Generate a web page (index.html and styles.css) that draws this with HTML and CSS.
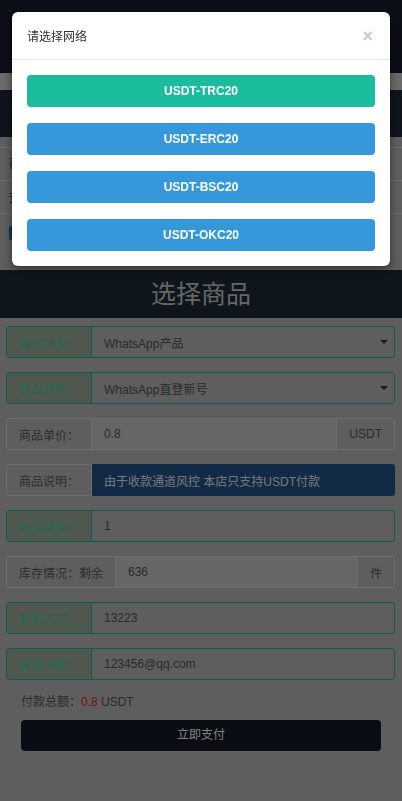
FILE: index.html
```html
<!DOCTYPE html>
<html lang="zh-CN">
<head>
<meta charset="utf-8">
<meta name="viewport" content="width=device-width, initial-scale=1">
<title>选择商品</title>
<link rel="stylesheet" href="styles.css">
</head>
<body>
<div class="page">
  <div class="topbar"></div>
  <div class="band"></div>
  <div class="subbar"></div>
  <div class="query">
    <div class="qrow">商品订单</div>
    <div class="qrow">查询方式</div>
    <div class="qactions"><span class="qbtn"></span></div>
  </div>
  <div class="hero">选择商品</div>
  <div class="form">
    <div class="row row-ok">
      <div class="label">商品分类：</div>
      <div class="field">WhatsApp产品<span class="caret"></span></div>
    </div>
    <div class="row row-ok">
      <div class="label">商品名称：</div>
      <div class="field">WhatsApp直登新号<span class="caret"></span></div>
    </div>
    <div class="row">
      <div class="label">商品单价：</div>
      <div class="field field-ro">0.8</div>
      <div class="addon">USDT</div>
    </div>
    <div class="row">
      <div class="label">商品说明：</div>
      <div class="field field-desc">由于收款通道风控 本店只支持USDT付款</div>
    </div>
    <div class="row row-ok">
      <div class="label">购买数量：</div>
      <div class="field">1</div>
    </div>
    <div class="row">
      <div class="label">库存情况：剩余</div>
      <div class="field field-ro">636</div>
      <div class="addon">件</div>
    </div>
    <div class="row row-ok">
      <div class="label">联系方式：</div>
      <div class="field">13223</div>
    </div>
    <div class="row row-ok">
      <div class="label">发送卡密：</div>
      <div class="field">123456@qq.com</div>
    </div>
    <div class="summary">
      <div class="total">付款总额：<span class="amount">0.8</span> USDT</div>
      <div class="pay">立即支付</div>
    </div>
  </div>
</div>
<div class="backdrop"></div>
<div class="modal">
  <div class="modal-header">
    <span class="modal-title">请选择网络</span>
    <span class="close">×</span>
  </div>
  <div class="modal-body">
    <div class="net net-green">USDT-TRC20</div>
    <div class="net">USDT-ERC20</div>
    <div class="net">USDT-BSC20</div>
    <div class="net">USDT-OKC20</div>
  </div>
</div>
</body>
</html>
```
FILE: styles.css
```css
* { box-sizing: border-box; }
html, body { margin: 0; padding: 0; }
body {
  font-family: "Liberation Sans", "Noto Sans CJK SC", sans-serif;
  font-size: 12px;
  color: #333;
  background: #bcbcbc;
  width: 402px;
  height: 801px;
  overflow: hidden;
}
.page { background: #bcbcbc; min-height: 801px; }
.topbar { height: 73px; background: #161c2c; }
.band { height: 17px; background: #d4d4d4; }
.subbar { height: 47px; background: #1e2838; }
.query { padding-top: 10px; background: #bcbcbc; }
.qrow {
  height: 33px;
  line-height: 33px;
  border-top: 1px solid #dcdcdc;
  padding-left: 9px;
  color: #222;
  font-size: 12px;
}
.qrow + .qrow { height: 34px; line-height: 34px; border-bottom: 1px solid #dcdcdc; }
.qactions { padding: 12px 9px 30px; }
.qbtn {
  display: block;
  width: 14px;
  height: 14px;
  background: #2a6cb0;
  border-radius: 2px;
}
.hero {
  height: 48px;
  line-height: 48px;
  background: #1e2a3a;
  color: #cccccc;
  font-size: 25px;
  text-align: center;
}
.form { padding: 8px 7px 0 6px; }
.row {
  display: flex;
  height: 32px;
  margin-bottom: 14px;
  border: 1px solid #dcdcdc;
  border-radius: 3px;
  background: #bcbcbc;
}
.row-ok { border-color: #1abc9c; }
.label {
  display: flex;
  align-items: center;
  padding: 0 12px;
  color: #5a5a5a;
  border-right: 1px solid #dcdcdc;
  white-space: nowrap;
}
.row-ok .label {
  background: #9eae9e;
  color: #4cd0a0;
  border-right-color: #1abc9c;
}
.field {
  flex: 1;
  display: flex;
  align-items: center;
  padding: 0 12px;
  color: #555;
  position: relative;
}
.field-ro { background: #cccccc; }
.field-desc {
  background: #24548a;
  color: #e6f0fa;
  margin: -1px -1px -1px 0;
  border-radius: 0 3px 3px 0;
}
.caret {
  position: absolute;
  right: 6px;
  top: 13px;
  width: 0;
  height: 0;
  border-left: 4px solid transparent;
  border-right: 4px solid transparent;
  border-top: 4px solid #333;
}
.addon {
  display: flex;
  align-items: center;
  padding: 0 12px;
  color: #5a5a5a;
  border-left: 1px solid #dcdcdc;
}
.summary { padding: 0 14px 0 15px; }
.total {
  line-height: 16px;
  color: #555;
}
.amount { color: #ff1428; }
.pay {
  margin-top: 10px;
  height: 31px;
  line-height: 31px;
  background: #141a28;
  color: #fff;
  border-radius: 4px;
  text-align: center;
}
.backdrop {
  position: fixed;
  inset: 0;
  background: rgba(0, 0, 0, 0.5);
}
.modal {
  position: fixed;
  top: 12px;
  left: 12px;
  width: 378px;
  background: #fff;
  border-radius: 6px;
  box-shadow: 0 3px 9px rgba(0, 0, 0, 0.5);
}
.modal-header {
  display: flex;
  justify-content: space-between;
  align-items: center;
  height: 48px;
  padding: 0 17px 0 15px;
  border-bottom: 1px solid #e5e5e5;
}
.modal-title { font-size: 12px; color: #333; }
.close {
  font-size: 18px;
  font-weight: bold;
  color: #c8c8c8;
  line-height: 1;
}
.modal-body {
  display: flex;
  flex-direction: column;
  gap: 16px;
  padding: 15px 15px 15px;
}
.net {
  height: 32px;
  line-height: 32px;
  border-radius: 4px;
  background: #3498db;
  color: #fff;
  font-weight: bold;
  text-align: center;
  font-size: 12px;
}
.net-green { background: #1abc9c; }
```
